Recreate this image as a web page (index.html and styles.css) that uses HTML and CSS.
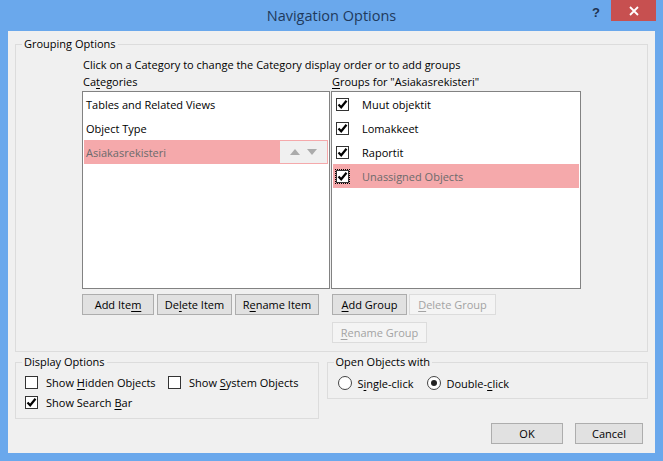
FILE: index.html
```html
<!DOCTYPE html>
<html>
<head>
<meta charset="utf-8">
<title>Navigation Options</title>
<link rel="stylesheet" href="styles.css">
</head>
<body>
<div class="window">
  <div class="titlebar">
    <div class="tb-side"></div>
    <div class="title">Navigation Options</div>
    <div class="tb-side tb-controls">
      <span class="help">?</span>
      <span class="close"><svg width="10" height="10" viewBox="0 0 10 10"><path d="M1 1 L9 9 M9 1 L1 9" stroke="#fff" stroke-width="1.8" fill="none"/></svg></span>
    </div>
  </div>
  <div class="client">
    <fieldset class="group grouping">
      <legend>Grouping Options</legend>
      <div class="grouping-body">
        <p class="hint">Click on a Category to change the Category display order or to add groups</p>
        <div class="cols">
          <div class="col">
            <div class="col-label">Ca<u>t</u>egories</div>
            <div class="list">
              <div class="row"><span class="cat-text">Tables and Related Views</span></div>
              <div class="row"><span class="cat-text">Object Type</span></div>
              <div class="row selected">
                <span class="cat-text">Asiakasrekisteri</span>
                <span class="arrows">
                  <svg width="10" height="6" viewBox="0 0 10 6"><path d="M0 6 L5 0 L10 6 Z" fill="#ababab"/></svg>
                  <svg width="10" height="6" viewBox="0 0 10 6"><path d="M0 0 L5 6 L10 0 Z" fill="#ababab"/></svg>
                </span>
              </div>
            </div>
            <div class="btns">
              <button class="btn w-add-item">Add Ite<u>m</u></button>
              <button class="btn w-del-item">De<u>l</u>ete Item</button>
              <button class="btn w-ren-item">R<u>e</u>name Item</button>
            </div>
          </div>
          <div class="col col-right">
            <div class="col-label"><u>G</u>roups for "Asiakasrekisteri"</div>
            <div class="list">
              <div class="row"><span class="cb checked"><svg width="11" height="11" viewBox="0 0 11 11"><path d="M1.5 5.5 L4.2 8.3 L9.5 1.8" stroke="#000" stroke-width="2.2" fill="none"/></svg></span><span class="grp-text">Muut objektit</span></div>
              <div class="row"><span class="cb checked"><svg width="11" height="11" viewBox="0 0 11 11"><path d="M1.5 5.5 L4.2 8.3 L9.5 1.8" stroke="#000" stroke-width="2.2" fill="none"/></svg></span><span class="grp-text">Lomakkeet</span></div>
              <div class="row"><span class="cb checked"><svg width="11" height="11" viewBox="0 0 11 11"><path d="M1.5 5.5 L4.2 8.3 L9.5 1.8" stroke="#000" stroke-width="2.2" fill="none"/></svg></span><span class="grp-text">Raportit</span></div>
              <div class="row selected"><span class="focus"><span class="cb checked"><svg width="11" height="11" viewBox="0 0 11 11"><path d="M1.5 5.5 L4.2 8.3 L9.5 1.8" stroke="#000" stroke-width="2.2" fill="none"/></svg></span></span><span class="grp-text">Unassigned Objects</span></div>
            </div>
            <div class="btns">
              <button class="btn w-add-grp"><u>A</u>dd Group</button>
              <button class="btn disabled w-del-grp"><u>D</u>elete Group</button>
            </div>
            <div class="btns btns-second">
              <button class="btn disabled w-ren-grp"><u>R</u>ename Group</button>
            </div>
          </div>
        </div>
      </div>
    </fieldset>
    <div class="bottom-row">
      <fieldset class="group display">
        <legend>Display Options</legend>
        <div class="display-body">
          <div class="opt-row">
            <label class="opt opt-hidden"><span class="cb"></span><span>Show <u>H</u>idden Objects</span></label>
            <label class="opt"><span class="cb"></span><span>Show <u>S</u>ystem Objects</span></label>
          </div>
          <div class="opt-row">
            <label class="opt"><span class="cb checked"><svg width="11" height="11" viewBox="0 0 11 11"><path d="M1.5 5.5 L4.2 8.3 L9.5 1.8" stroke="#000" stroke-width="2.2" fill="none"/></svg></span><span>Show Search <u>B</u>ar</span></label>
          </div>
        </div>
      </fieldset>
      <fieldset class="group open">
        <legend>Open Objects with</legend>
        <div class="open-body">
          <div class="opt-row">
            <label class="opt opt-single"><span class="radio"></span><span>S<u>i</u>ngle-click</span></label>
            <label class="opt"><span class="radio on"></span><span>Double-<u>c</u>lick</span></label>
          </div>
        </div>
      </fieldset>
    </div>
    <div class="dialog-btns">
      <button class="btn w-ok">OK</button>
      <button class="btn w-cancel">Cancel</button>
    </div>
  </div>
</div>
</body>
</html>
```
FILE: styles.css
```css
* { box-sizing: border-box; }
html, body { margin: 0; padding: 0; }
body {
  width: 663px;
  height: 461px;
  background: #6aa8ec;
  font-family: "Open Sans", "Noto Sans", sans-serif;
  font-size: 11px;
  color: #000;
  overflow: hidden;
}
u { text-decoration: underline; text-underline-offset: 2px; }
.window { width: 663px; height: 461px; display: flex; flex-direction: column; }
.titlebar {
  height: 31px;
  display: grid;
  grid-template-columns: 1fr auto 1fr;
  align-items: start;
}
.title {
  font-size: 14.5px;
  color: #1f3a5c;
  line-height: 31px;
}
.tb-controls { display: flex; justify-content: flex-end; padding-right: 7px; }
.help {
  font-family: "Liberation Sans", sans-serif;
  font-weight: bold;
  font-size: 13px;
  color: #1f3350;
  line-height: 26px;
  margin-right: 11px;
}
.close {
  width: 45px;
  height: 21px;
  background: #c75050;
  display: flex;
  align-items: center;
  justify-content: center;
}
.client {
  margin: 0 8px 8px 8px;
  flex: 1;
  background: #f0f0f0;
  padding: 5px 7px 8px 7px;
  display: flex;
  flex-direction: column;
}
.group {
  margin: 0;
  border: 1px solid #dcdcdc;
  padding: 0;
  min-width: 0;
}
.group legend {
  padding: 0 2px;
  margin-left: 6px;
  line-height: 16px;
  color: #000;
}
.grouping-body { padding: 5px 0 8px 66px; }
.hint { margin: 0; line-height: 16px; padding-left: 1px; }
.cols { display: flex; gap: 1px; }
.col { width: 248px; }
.col-right { width: 250px; }
.col-label { line-height: 16px; margin-top: 1px; padding-left: 1px; }
.list {
  margin-top: 1px;
  height: 198px;
  border: 1px solid #828282;
  background: #fff;
  padding: 0 1px;
}
.row {
  height: 24px;
  display: flex;
  align-items: center;
}
.cat-text { padding-left: 2px; flex: 1; }
.row.selected { background: #f5a9ab; color: #6b6b6b; }
.arrows {
  width: 48px;
  align-self: stretch;
  background: #f0f0f0;
  border: 1px solid #f5a9ab;
  border-left: none;
  display: flex;
  align-items: center;
  justify-content: space-around;
  padding: 0 6px;
}
.cb {
  width: 13px;
  height: 13px;
  border: 1px solid #333;
  background: #fff;
  display: inline-flex;
  align-items: center;
  justify-content: center;
  flex: none;
}
.col-right .row .cb { margin-left: 3px; }
.focus { border: 1px dotted #000; display: inline-flex; margin-left: 2px; }
.col-right .row .focus .cb { margin-left: 0; }
.grp-text { padding-left: 13px; }
.row.selected .grp-text { padding-left: 12px; }
.btns { display: flex; gap: 3px; margin-top: 5px; }
.col-right .btns { padding-left: 1px; gap: 2px; }
.btns-second { margin-top: 7px; }
.btn {
  font-family: inherit;
  font-size: 11px;
  height: 21px;
  padding: 0;
  margin: 0;
  background: #e1e1e1;
  border: 1px solid #adadad;
  color: #000;
  line-height: 19px;
  text-align: center;
}
.btn.disabled { background: #f4f4f4; border-color: #dcdcdc; color: #a3a3a3; }
.w-add-item { width: 72px; }
.w-del-item { width: 75px; }
.w-ren-item { width: 84px; }
.w-add-grp { width: 75px; }
.w-del-grp { width: 87px; }
.w-ren-grp { width: 95px; }
.w-ok { width: 72px; }
.w-cancel { width: 68px; }
.bottom-row { display: flex; gap: 8px; margin-top: 2px; align-items: flex-start; }
.display { width: 304px; }
.display-body { padding: 2px 0 6px 9px; }
.open { width: 322px; }
.open-body { padding: 3px 0 5px 10px; }
.opt-row { display: flex; height: 20px; align-items: center; }
.opt { display: flex; align-items: center; }
.opt .cb { margin-right: 8px; }
.opt-hidden { width: 143px; }
.radio {
  width: 14px;
  height: 14px;
  border: 1px solid #444;
  border-radius: 50%;
  background: #fff;
  margin-right: 6px;
  display: inline-flex;
  align-items: center;
  justify-content: center;
  flex: none;
}
.radio.on::after {
  content: "";
  width: 6px;
  height: 6px;
  border-radius: 50%;
  background: #222;
}
.opt-single { width: 89px; }
.dialog-btns { display: flex; justify-content: flex-end; gap: 12px; margin-top: 4px; padding-right: 5px; }
```
